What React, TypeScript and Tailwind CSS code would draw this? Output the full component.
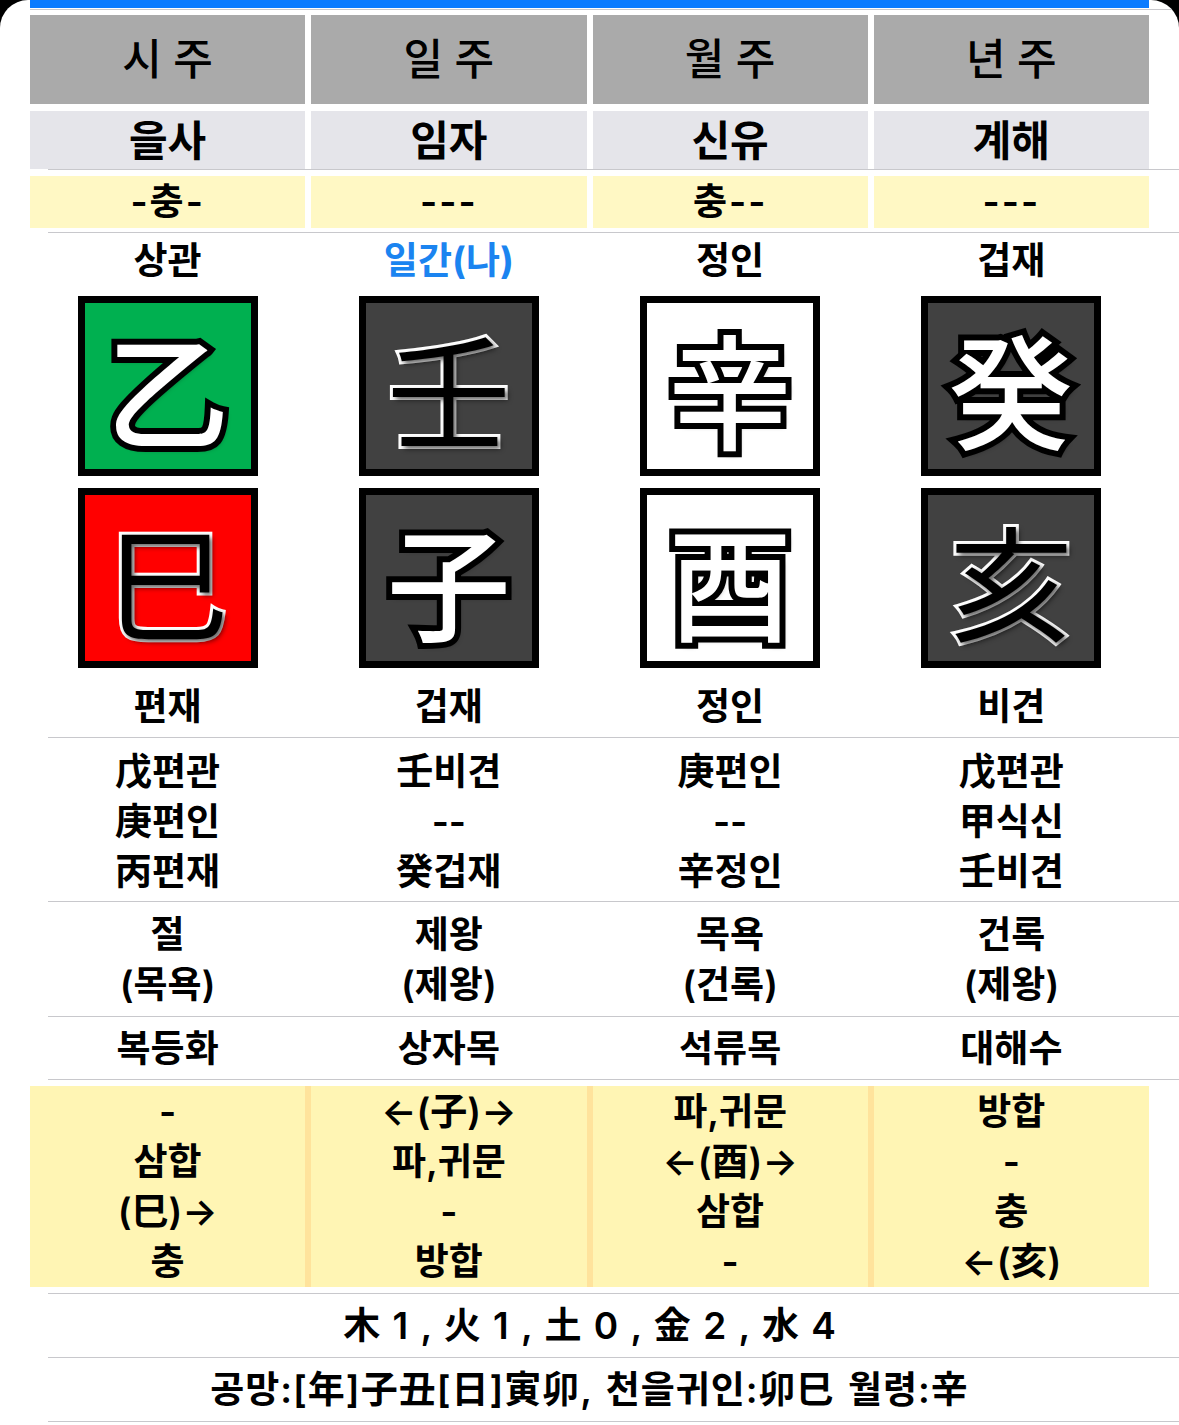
const FONT = "font-['Inter','Noto_Sans_CJK_KR','Noto_Sans_CJK_SC',sans-serif]";

type Glyph = { ch: string; bg: string; dark: boolean };

const PILLARS: {
  name: string;
  ganji: string;
  rel: string;
  top: string;
  stem: Glyph;
  branch: Glyph;
  bottom: string;
  hidden: string[];
  unseong: string[];
  napeum: string;
  hap: string[];
}[] = [
  {
    name: "시 주",
    ganji: "을사",
    rel: "-충-",
    top: "상관",
    stem: { ch: "乙", bg: "bg-[#00b050]", dark: false },
    branch: { ch: "巳", bg: "bg-[#ff0000]", dark: true },
    bottom: "편재",
    hidden: ["戊편관", "庚편인", "丙편재"],
    unseong: ["절", "(목욕)"],
    napeum: "복등화",
    hap: ["-", "삼합", "(巳)→", "충"],
  },
  {
    name: "일 주",
    ganji: "임자",
    rel: "---",
    top: "일간(나)",
    stem: { ch: "壬", bg: "bg-[#414141]", dark: true },
    branch: { ch: "子", bg: "bg-[#414141]", dark: false },
    bottom: "겁재",
    hidden: ["壬비견", "--", "癸겁재"],
    unseong: ["제왕", "(제왕)"],
    napeum: "상자목",
    hap: ["←(子)→", "파,귀문", "-", "방합"],
  },
  {
    name: "월 주",
    ganji: "신유",
    rel: "충--",
    top: "정인",
    stem: { ch: "辛", bg: "bg-white", dark: false },
    branch: { ch: "酉", bg: "bg-white", dark: false },
    bottom: "정인",
    hidden: ["庚편인", "--", "辛정인"],
    unseong: ["목욕", "(건록)"],
    napeum: "석류목",
    hap: ["파,귀문", "←(酉)→", "삼합", "-"],
  },
  {
    name: "년 주",
    ganji: "계해",
    rel: "---",
    top: "겁재",
    stem: { ch: "癸", bg: "bg-[#414141]", dark: false },
    branch: { ch: "亥", bg: "bg-[#414141]", dark: true },
    bottom: "비견",
    hidden: ["戊편관", "甲식신", "壬비견"],
    unseong: ["건록", "(제왕)"],
    napeum: "대해수",
    hap: ["방합", "-", "충", "←(亥)"],
  },
];

function Line() {
  return <div className="ml-[48px] h-px bg-[#c8c8cc]" />;
}

function Box({ g }: { g: Glyph }) {
  return (
    <div className={`w-[180px] h-[180px] border-[7px] border-black flex items-center justify-center ${g.bg}`}>
      {g.dark ? (
        <span className="text-[124px] leading-none font-['Noto_Sans_CJK_KR',sans-serif] font-normal text-black [-webkit-text-stroke:6px_white] [paint-order:stroke_fill] [text-shadow:3px_3px_5px_rgba(0,0,0,0.6)]">
          {g.ch}
        </span>
      ) : (
        <span className="text-[124px] leading-none font-['Noto_Sans_CJK_KR',sans-serif] font-medium text-white [-webkit-text-stroke:12px_black] [paint-order:stroke_fill] [text-shadow:3px_3px_5px_rgba(0,0,0,0.6)]">
          {g.ch}
        </span>
      )}
    </div>
  );
}

function TextRow({ cells, className }: { cells: React.ReactNode[]; className: string }) {
  return (
    <div className={`grid grid-cols-4 gap-x-[6px] px-[30px] ${className}`}>
      {cells.map((c, i) => (
        <div key={i} className="flex flex-col items-center justify-center text-center">
          {c}
        </div>
      ))}
    </div>
  );
}

export default function App() {
  return (
    <div className={`w-[1179px] h-[1425px] bg-black ${FONT} text-black`}>
      <div className="h-full bg-white rounded-t-[28px] overflow-hidden">
        <div className="mx-[30px] h-[8px] bg-[#0a7bff]" />
        <div className="ml-[30px] mt-px h-px bg-[#c8c8cc]" />

        {/* 주 headers */}
        <div className="mt-[5px] grid grid-cols-4 gap-x-[6px] px-[30px]">
          {PILLARS.map((p) => (
            <div key={p.name} className="h-[89px] bg-[#aaaaaa] flex items-center justify-center text-[43px] font-medium">
              {p.name}
            </div>
          ))}
        </div>

        {/* 간지 */}
        <div className="mt-[7px] grid grid-cols-4 gap-x-[6px] px-[30px]">
          {PILLARS.map((p) => (
            <div key={p.name} className="h-[58px] bg-[#e5e5ea] flex items-center justify-center text-[42px] font-semibold">
              {p.ganji}
            </div>
          ))}
        </div>
        <Line />

        {/* 충 */}
        <div className="mt-[6px] grid grid-cols-4 gap-x-[6px] px-[30px]">
          {PILLARS.map((p) => (
            <div key={p.name} className="h-[52px] bg-[#fff8c4] flex items-center justify-center text-[37px] font-semibold tracking-[2px]">
              {p.rel}
            </div>
          ))}
        </div>
        <div className="mt-[4px]">
          <Line />
        </div>

        {/* 십성 (천간) */}
        <TextRow
          className="h-[52px] text-[37px] font-semibold"
          cells={PILLARS.map((p) =>
            p.top === "일간(나)" ? (
              <span className="text-[#1b84f0] font-bold">{p.top}</span>
            ) : (
              <span>{p.top}</span>
            )
          )}
        />

        {/* 간지 박스 */}
        <div className="mt-[11px] grid grid-cols-4 gap-x-[6px] gap-y-[12px] px-[30px] justify-items-center">
          {PILLARS.map((p) => (
            <Box key={p.name + "s"} g={p.stem} />
          ))}
          {PILLARS.map((p) => (
            <Box key={p.name + "b"} g={p.branch} />
          ))}
        </div>

        {/* 십성 (지지) */}
        <TextRow
          className="h-[69px] pt-[8px] text-[37px] font-semibold"
          cells={PILLARS.map((p) => <span>{p.bottom}</span>)}
        />
        <Line />

        {/* 지장간 */}
        <TextRow
          className="h-[163px] pt-[5px] text-[37px] font-semibold leading-[50px]"
          cells={PILLARS.map((p) => p.hidden.map((h, i) => <span key={i}>{h}</span>))}
        />
        <Line />

        {/* 12운성 */}
        <TextRow
          className="h-[114px] pt-[2px] text-[37px] font-semibold leading-[50px]"
          cells={PILLARS.map((p) => p.unseong.map((h, i) => <span key={i}>{h}</span>))}
        />
        <Line />

        {/* 납음 */}
        <TextRow
          className="h-[62px] pt-[1px] text-[37px] font-semibold"
          cells={PILLARS.map((p) => <span>{p.napeum}</span>)}
        />
        <Line />

        {/* 합충 */}
        <div className="mt-[6px] mx-[30px] grid grid-cols-4 gap-x-[6px] bg-[#ffe39c]">
          {PILLARS.map((p) => (
            <div key={p.name} className="h-[201px] bg-[#fff5b4] flex flex-col items-center justify-center text-[37px] font-semibold leading-[50px]">
              {p.hap.map((h, i) => (
                <span key={i}>{h}</span>
              ))}
            </div>
          ))}
        </div>
        <div className="mt-[6px]">
          <Line />
        </div>

        {/* 오행 */}
        <div className="h-[63px] flex items-center justify-center text-[37px] font-semibold [word-spacing:3px]">
          木 1 , 火 1 , 土 0 , 金 2 , 水 4
        </div>
        <Line />

        {/* 공망 */}
        <div className="h-[63px] flex items-center justify-center text-[37px] font-semibold tracking-[1px] [word-spacing:3px]">
          공망:[年]子丑[日]寅卯, 천을귀인:卯巳 월령:辛
        </div>
        <Line />
      </div>
    </div>
  );
}
